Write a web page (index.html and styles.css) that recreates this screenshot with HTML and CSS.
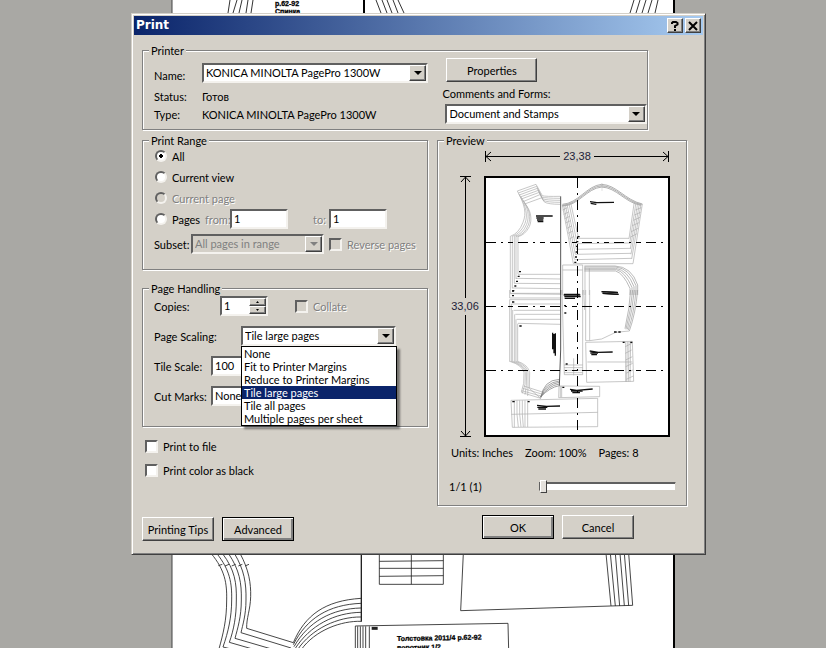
FILE: index.html
```html
<!DOCTYPE html>
<html lang="en">
<head>
    <meta charset="UTF-8">
    <meta name="viewport" content="width=device-width, initial-scale=1.0">
    <title>Print</title>
    <link rel="stylesheet" href="styles.css">
</head>
<body>

    <!-- Open document behind the dialog -->
    <svg class="document" viewBox="0 0 826 648" preserveAspectRatio="xMidYMin slice" aria-hidden="true">
        <rect x="172" y="-5" width="502" height="660" fill="#fff" stroke="#444"/>
        <path d="M674 0V648" stroke="#000" stroke-width="2"/>
        <g fill="none" stroke="#333" stroke-width="1">
            <path d="M230 0L228 13M237 0L233 13M242 0L239 13M248 0L246 13M253 0L251 13"/>
            <path d="M376 0L381 13M382 0L387 13M387 0L392 13M393 0L398 13M398 0L404 13"/>
            <path d="M634 0L630 13M640 0L636 13M646 0L642 13M652 0L648 13M658 0L655 13"/>
            <path d="M364 0V13" stroke="#000" stroke-width="2"/>
        </g>
        <g class="doc-text">
            <text x="275" y="6">р.62-92</text>
            <text x="275" y="14">Спинка</text>
            <text x="397" y="641" transform="rotate(-1 397 641)">Толстовка 2011/4 р.62-92</text>
            <text x="397" y="650" transform="rotate(-1 397 650)">воротник 1/2</text>
        </g>
        <g transform="translate(165 550) scale(.33333)" fill="none" stroke="#222" stroke-width="2.5">
            <path d="M138 10C180 60 186 100 185 150C185 210 175 250 161 300"/>
            <path d="M155 10C195 60 201 100 200 150C200 200 190 245 174 291L230 305"/>
            <path d="M172 10C210 60 215 100 214 150C214 200 206 240 193 277L280 302"/>
            <path d="M190 10C224 60 230 100 229 150C229 200 218 235 210 265L330 300"/>
            <path d="M208 10C238 60 244 100 243 150C243 195 233 225 228 248L378 294"/>
            <path d="M225 10C252 60 258 100 257 140C256 180 244 205 245 235L385 278"/>
            <path d="M160 47L172 43M180 48L192 43M200 48L212 43M220 48L232 43M240 48L252 43"/>
            <path d="M588 145C480 152 420 195 385 278"/>
            <path d="M588 160C490 164 425 205 385 284"/>
            <path d="M588 174C500 176 430 215 387 290"/>
            <path d="M588 187C510 188 435 225 389 298"/>
            <path d="M588 201C520 200 440 235 397 300"/>
            <path d="M588 214C530 212 450 240 408 300"/>
            <path d="M589 10V215" stroke-width="4"/>
            <path d="M643 10V103H835V10M739 10V103M643 34L835 32M643 55H835M643 79L835 77"/>
            <path d="M895 10L887 182L1337 168L1403 166L1391 10"/>
            <path d="M1323 10L1338 168M1336 10L1351 168M1351 10L1364 168M1365 10L1378 167M1378 10L1391 167"/>
            <path d="M571 300V228L1029 220L1031 300M578 229V300M586 229V300M594 229V300M602 229V300M613 229V300"/>
            <path d="M620 235H638" stroke-width="9"/>
        </g>
    </svg>

    <!-- Print dialog -->
    <form class="dialog" onsubmit="return false">
        <header class="titlebar">
            <h1>Print</h1>
            <div class="title-buttons">
                <button type="button" class="title-button" aria-label="Help">
                    <svg width="10" height="10" viewBox="0 0 10 10" fill="none" stroke="#000" stroke-width="2"><path d="M2 3V2L3 1H6L7.500 2V3.500L5 5V7M5 8V10"/></svg>
                </button>
                <button type="button" class="title-button" aria-label="Close">
                    <svg width="10" height="10" viewBox="0 0 10 10" stroke="#000" stroke-width="2"><path d="M1 1L9 9M9 1L1 9"/></svg>
                </button>
            </div>
        </header>

        <div class="content">
            <fieldset class="group printer">
                <legend>Printer</legend>
                <div class="printer-grid">
                    <div class="printer-info">
                        <label for="name">Name:</label>
                        <div class="combo">
                            <select id="name"><option>KONICA MINOLTA PagePro 1300W</option></select>
                            <span class="arrow"></span>
                        </div>
                        <span class="info">Status:</span><span class="info">Готов</span>
                        <span class="info">Type:</span><span class="info">KONICA MINOLTA PagePro 1300W</span>
                    </div>
                    <div class="printer-options">
                        <button type="button" class="button properties">Properties</button>
                        <label for="comments">Comments and Forms:</label>
                        <div class="combo comments">
                            <select id="comments"><option>Document and Stamps</option></select>
                            <span class="arrow"></span>
                        </div>
                    </div>
                </div>
            </fieldset>

            <div class="columns">
                <div class="settings">
                    <fieldset class="group range">
                        <legend>Print Range</legend>
                        <div class="rows">
                            <div class="row"><input type="radio" name="range" id="all" checked><label for="all">All</label></div>
                            <div class="row"><input type="radio" name="range" id="view"><label for="view">Current view</label></div>
                            <div class="row"><input type="radio" name="range" id="page" disabled><label for="page" class="disabled">Current page</label></div>
                            <div class="row">
                                <input type="radio" name="range" id="pages"><label for="pages" class="pages-label">Pages</label>
                                <label for="from" class="from-label disabled">from:</label><input type="text" id="from" class="page-number" value="1">
                                <label for="to" class="to-label disabled">to:</label><input type="text" id="to" class="page-number" value="1">
                            </div>
                            <div class="row subset">
                                <label for="subset" class="subset-label">Subset:</label>
                                <div class="combo subset-combo">
                                    <select id="subset" disabled><option>All pages in range</option></select>
                                    <span class="arrow"></span>
                                </div>
                                <input type="checkbox" id="reverse" disabled><label for="reverse" class="disabled">Reverse pages</label>
                            </div>
                        </div>
                    </fieldset>

                    <fieldset class="group handling">
                        <legend>Page Handling</legend>
                        <div class="handling-rows">
                            <div class="row">
                                <label for="copies" class="copies-label">Copies:</label>
                                <div class="spinner">
                                    <input type="text" id="copies" value="1">
                                    <div class="spin-buttons">
                                        <button type="button" aria-label="More copies"><svg width="3" height="2" viewBox="0 0 3 2"><path d="M0 2L1.500 0L3 2Z"/></svg></button>
                                        <button type="button" aria-label="Fewer copies"><svg width="3" height="2" viewBox="0 0 3 2"><path d="M0 0L1.500 2L3 0Z"/></svg></button>
                                    </div>
                                </div>
                                <input type="checkbox" id="collate" disabled><label for="collate" class="disabled">Collate</label>
                            </div>
                            <div class="row">
                                <label for="scaling" class="scaling-label">Page Scaling:</label>
                                <div class="combo scaling-combo">
                                    <select id="scaling"><option>Tile large pages</option></select>
                                    <span class="arrow"></span>
                                    <ul class="dropdown" role="listbox" aria-label="Page Scaling">
                                        <li role="option">None</li>
                                        <li role="option">Fit to Printer Margins</li>
                                        <li role="option">Reduce to Printer Margins</li>
                                        <li role="option" class="selected" aria-selected="true">Tile large pages</li>
                                        <li role="option">Tile all pages</li>
                                        <li role="option">Multiple pages per sheet</li>
                                    </ul>
                                </div>
                            </div>
                            <div class="row">
                                <label for="scale" class="tile-label">Tile Scale:</label>
                                <input type="text" id="scale" class="scale" value="100">
                            </div>
                            <div class="row">
                                <label for="marks" class="tile-label">Cut Marks:</label>
                                <div class="combo marks-combo">
                                    <select id="marks"><option>None</option></select>
                                    <span class="arrow"></span>
                                </div>
                            </div>
                        </div>
                    </fieldset>

                    <div class="output">
                        <div class="row"><input type="checkbox" id="file"><label for="file">Print to file</label></div>
                        <div class="row"><input type="checkbox" id="black"><label for="black">Print color as black</label></div>
                    </div>
                </div>

                <fieldset class="group preview">
                    <legend>Preview</legend>
                    <div class="preview-grid">
                        <div class="ruler horizontal">
                            <svg width="7" height="11" viewBox="0 0 7 11"><path d="M.5 0V11M6 1L1 5.500L6 10M1 5.500H7"/></svg>
                            <span class="line"></span>
                            <span class="size">23,38</span>
                            <span class="line"></span>
                            <svg width="7" height="11" viewBox="0 0 7 11"><path d="M6.500 0V11M1 1L6 5.500L1 10M0 5.500H6"/></svg>
                        </div>
                        <div class="ruler vertical">
                            <svg width="11" height="7" viewBox="0 0 11 7"><path d="M0 .5H11M1 6L5.500 1L10 6M5.500 1V7"/></svg>
                            <span class="line"></span>
                            <span class="size">33,06</span>
                            <span class="line"></span>
                            <svg width="11" height="7" viewBox="0 0 11 7"><path d="M0 6.500H11M1 1L5.500 6L10 1M5.500 0V6"/></svg>
                        </div>
                        <svg class="sheet" viewBox="0 0 186 261" role="img" aria-label="Page preview">
                            <rect x="1" y="1" width="184" height="259" fill="#fff" stroke="#000" stroke-width="2"/>
                            <!-- upper pieces -->
                            <g transform="translate(-49 -41) scale(.33333)" fill="none" stroke="#aaa" stroke-width="2">
                                <path d="M247 168L303 148L322 182Q330 185 376 184"/>
                                <path d="M250 174L305 154L320 186Q332 190 376 190"/>
                                <path d="M253 180L307 160L322 191Q334 196 376 196"/>
                                <path d="M256 186L310 166L324 196Q336 202 376 202"/>
                                <path d="M259 192L313 172L328 201Q340 208 376 208"/>
                                <path d="M264 200L317 178M269 207L321 188"/>
                                <path d="M247 168C270 210 275 235 264 262Q252 295 226 304V474M252 178C274 215 279 240 270 265Q258 295 232 304V460M258 186C280 218 284 243 275 268Q263 298 238 304V445M264 196C285 222 288 248 280 270Q268 300 243 305V432M268 205C289 225 292 255 283 275Q270 300 249 305V418"/>
                                <path d="M249 418H376M243 430L376 432M238 445L376 446M232 459L376 461M226 475H376"/>
                                <path d="M377 184V480" stroke="#555" stroke-width="3"/>
                                <path d="M382 208C430 205 455 152 500 148C545 150 570 195 622 207M382 211C430 209 455 156 500 152C545 154 570 199 620 209M382 213C430 213 455 160 500 156C545 158 570 203 618 211" stroke="#888"/>
                                <path d="M382 210L415 386M386 210L418 372M391 209L421 358M396 207L424 343M402 205L427 328M407 203L431 312"/>
                                <path d="M622 207L594 386M618 207L590 372M613 206L588 358M608 204L586 342M603 202L584 326M598 200L582 311"/>
                                <path d="M383 225L397 218M386 238L401 231M389 251L404 244M392 264L407 257M396 280L411 272M399 295L414 288M403 312L417 304M601 225L619 218M598 240L617 232M595 256L615 247M592 272L612 263M589 290L609 280M587 306L606 296"/>
                                <path d="M431 310H582M427 326L584 324M424 343L586 340M421 358L588 355M418 374L590 370M415 386H594"/>
                                <path d="M493 155H510M501 144V168" stroke-width="1"/>
                                <path d="M383 390H443V480M383 390V480M383 405H443M450 395V480M463 400V480"/>
                                <path d="M448 393H540Q590 395 608 450V480M448 396H542Q584 400 603 452V480M448 400H542Q578 405 597 455V480M448 404H544Q570 410 591 457V480M448 408H542Q565 415 585 460V480" stroke="#999"/>
                                <g stroke="#111" stroke-width="4">
                                    <path d="M303 243H353M304 249H326M306 255H325M308 260H325M465 200L485 203L537 202M467 205L484 208M500 470L548 472M503 475L551 478M387 478H434"/>
                                    <path d="M252 410H258M248 424H254M243 439H249M238 453H244M232 467H238M427 305H434M424 320H430M423 334H429M422 351H428M420 366H426M418 382H424"/>
                                </g>
                            </g>
                            <!-- lower pieces -->
                            <g transform="translate(-49 114) scale(.33333)" fill="none" stroke="#aaa" stroke-width="2">
                                <path d="M224 0V24H376M226 11L376 13M224 29H376M224 29V215M229 42H376M229 42V215M236 61H376M233 60V215M241 73H376M239 73V215M245 88H376M243 88V215M249 100L376 103M248 101V215"/>
                                <path d="M224 214Q262 225 267 248L266 280L259 306M229 214Q266 225 271 248L270 283L262 310M235 214Q270 225 275 248L274 287L270 314M242 214Q275 225 279 248L279 291L278 318M248 214Q280 225 284 248L283 295L317 325"/>
                                <path d="M266 288L322 306M263 295L320 312M260 302L318 318M259 307L317 325"/>
                                <path d="M317 325Q325 270 373 268M317 321Q330 278 373 273M317 321Q335 283 373 277M317 321Q340 287 373 282M317 321Q344 292 373 287" stroke="#777"/>
                                <path d="M377 0V180L373 288" stroke="#555" stroke-width="3"/>
                                <path d="M381 0L388 254H443V0M387 225H443M387 233H443M387 241H443M387 248H443M416 205V256M446 0L449 60M452 0V152M464 0V152L500 147L542 127L583 123M452 152H464"/>
                                <path d="M608 0Q602 70 583 123M603 0Q598 65 580 120M598 0Q593 60 577 118M593 0Q588 60 573 118M587 0Q584 55 570 116" stroke="#999"/>
                                <path d="M452 157L592 154L596 274L455 277ZM457 216H592M572 155V275M577 155L575 275M582 155L580 275M587 155L585 275M571 170L590 160M571 190L590 180M572 210L592 200M572 230L593 220M573 250L594 240M574 268L595 258"/>
                                <path d="M372 288L494 289V320L371 323ZM376 288V322M380 288V322"/>
                                <path d="M228 331L488 325V410L232 412ZM229 373L488 367M238 331V412M246 331V373L250 411M254 331V373L258 411M262 331V373L265 411M270 331V411M278 331V411"/>
                                <g stroke="#111" stroke-width="4">
                                    <path d="M386 15H436M388 20H437M389 25H420M500 5L549 8M503 10L550 13M464 183L490 187L533 186M466 189H489M469 194H486M353 128V178M357 132V190M361 130V197M405 298L425 301L473 297M408 303H443M412 308H435M306 346L335 349L375 348M307 352H337M310 357H333"/>
                                    <path d="M231 3H237M231 17H237M231 36H238M253 108H260M387 47H393M388 69H394M392 222H398M563 157H569M586 157H592M382 292H388M232 335H239M278 335H284M537 126H545M550 126H557"/>
                                </g>
                            </g>
                            <path d="M93.500 2V259" stroke="#000" stroke-dasharray="10 5 2 5"/>
                            <path d="M2 66.500H180M2 130.500H180M2 194.500H180" stroke="#000" stroke-dasharray="10 5 2 5 5 5"/>
                        </svg>
                    </div>
                    <div class="stats"><span>Units: Inches</span><span>Zoom: 100%</span><span>Pages: 8</span></div>
                    <div class="pager">
                        <label for="slider">1/1 (1)</label>
                        <input type="range" id="slider" min="1" max="8" value="1">
                    </div>
                </fieldset>
            </div>

            <footer class="buttons">
                <div class="button-group extra">
                    <button type="button" class="button">Printing Tips</button>
                    <button type="button" class="button default">Advanced</button>
                </div>
                <div class="button-group">
                    <button type="submit" class="button default">OK</button>
                    <button type="button" class="button">Cancel</button>
                </div>
            </footer>
        </div>
    </form>
</body>
</html>
```

FILE: styles.css
```css
* {
    box-sizing: border-box;
}
body {
    margin: 0;
    min-height: 100vh;
    padding: 13px 120px 0 131px;
    overflow: hidden;
    position: relative;
    background-color: #a9a8a4;
    font-family: Lato, "Liberation Sans", sans-serif;
    font-size: 11px;
    line-height: 13px;
    color: #000;
}
input, select, button {
    font: inherit;
    color: inherit;
    margin: 0;
}
.document {
    position: absolute;
    top: 0;
    left: 0;
    width: 100%;
    height: 100%;
}
.doc-text {
    font-family: "Liberation Sans", sans-serif;
    font-size: 7px;
    font-weight: bold;
    stroke: #000;
    stroke-width: 0.3;
}

/* Window frame */
.dialog {
    position: relative;
    min-width: 560px;
    background-color: #d4d0c8;
    border: 1px solid;
    border-color: #d4d0c8 #404040 #404040 #d4d0c8;
    box-shadow: inset 1px 1px 0 #fff, inset -1px -1px 0 #808080;
    padding: 2px;
}
.titlebar {
    display: flex;
    align-items: center;
    justify-content: space-between;
    height: 19px;
    padding: 0 2px;
    background: linear-gradient(to right, #0a246a, #a6caf0);
}
h1 {
    margin: 0;
    color: #fff;
    font-family: "DejaVu Sans", sans-serif;
    font-size: 12px;
    font-weight: bold;
}
.title-buttons {
    display: flex;
    gap: 2px;
}
.title-button, .button, .arrow, .spin-buttons button {
    background-color: #d4d0c8;
    border: 1px solid;
    border-color: #fff #404040 #404040 #fff;
    box-shadow: inset -1px -1px 0 #808080;
    padding: 0;
}
.title-button {
    display: flex;
    align-items: center;
    justify-content: center;
    width: 16px;
    height: 15px;
}
.content {
    padding: 9px 16px 11px 8px;
}

/* Group boxes */
.group {
    margin: 0;
    min-width: 0;
    padding: 0 0 0 11px;
    border: 1px solid #808080;
    box-shadow: 1px 1px 0 #fff, inset 1px 1px 0 #fff;
}
legend {
    margin-left: -5px;
    padding: 0 2px;
    background-color: #d4d0c8;
}
.row {
    display: flex;
    align-items: center;
    height: 20px;
}
.disabled {
    color: #808080;
    text-shadow: 1px 1px 0 #fff;
}

/* Fields */
input[type="text"], select {
    appearance: none;
    height: 20px;
    border: 2px solid;
    border-color: #606060 #f4f2ee #f4f2ee #606060;
    border-radius: 0;
    padding: 0 2px 2px;
    background-color: #fff;
}
select {
    display: block;
    width: 100%;
}
select:disabled {
    background-color: #d4d0c8;
    color: #808080;
    opacity: 1;
}
.combo {
    position: relative;
    min-width: 0;
}
.arrow {
    position: absolute;
    top: 2px;
    right: 2px;
    display: flex;
    align-items: center;
    justify-content: center;
    width: 17px;
    height: 16px;
    pointer-events: none;
}
.arrow::before {
    content: "";
    border: 4px solid transparent;
    border-top-color: #000;
    border-bottom-width: 0;
}
select:disabled + .arrow::before {
    border-top-color: #808080;
}
input[type="radio"], input[type="checkbox"] {
    appearance: none;
    flex: none;
    border: 2px solid;
    background-color: #fff;
}
input[type="radio"] {
    width: 12px;
    height: 12px;
    margin: 0 5px 0 1px;
    border-color: #606060 #f4f2ee #f4f2ee #606060;
    border-radius: 50%;
}
input[type="radio"]:checked {
    background-image: radial-gradient(circle, #000 2px, transparent 2px);
}
input[type="checkbox"] {
    width: 13px;
    height: 13px;
    margin-right: 5px;
    border-color: #606060 #f4f2ee #f4f2ee #606060;
}
input[type="radio"]:disabled, input[type="checkbox"]:disabled {
    background-color: #d4d0c8;
}

/* Printer */
.printer {
    margin-right: 39px;
}
.printer-grid {
    display: grid;
    grid-template-columns: 275fr 205fr;
    gap: 14px;
    padding-bottom: 5px;
}
.printer-info {
    display: grid;
    grid-template-columns: 48px 1fr;
    align-content: start;
    align-items: center;
    padding-top: 6px;
}
.printer-info .combo {
    margin-bottom: 5px;
}
.info {
    line-height: 18px;
}
.printer-options {
    display: flex;
    flex-direction: column;
    align-items: flex-start;
    padding-top: 1px;
}
.properties {
    width: 91px;
    margin: 0 0 5px 4px;
}
.comments {
    align-self: stretch;
    margin: 4px 0 0 3px;
}

/* Columns */
.columns {
    display: grid;
    grid-template-columns: 286fr 250fr;
    gap: 9px;
    margin-top: 4px;
}
.rows {
    display: flex;
    flex-direction: column;
    gap: 1px;
    margin-top: -1px;
    padding-bottom: 15px;
}
.pages-label {
    width: 33px;
}
.from-label {
    width: 25px;
}
.to-label {
    margin-left: 25px;
    width: 16px;
}
.page-number {
    width: 58px;
}
.subset {
    margin-top: 4px;
}
.subset-label {
    width: 37px;
}
.subset-combo {
    width: 133px;
    margin-right: 5px;
}
.handling {
    margin-top: 12px;
}
.handling-rows {
    display: flex;
    flex-direction: column;
    gap: 10px;
    padding: 1px 0 20px;
}
.copies-label {
    width: 66px;
}
.spinner {
    position: relative;
    width: 48px;
    margin-right: 27px;
}
.spinner input {
    display: block;
    width: 100%;
}
.spin-buttons {
    position: absolute;
    top: 2px;
    right: 2px;
    display: flex;
    flex-direction: column;
}
.spin-buttons button {
    display: flex;
    align-items: center;
    justify-content: center;
    width: 17px;
    height: 8px;
}
.scaling-label {
    width: 87px;
}
.scaling-combo {
    width: 155px;
}
.tile-label {
    width: 57px;
}
.scale, .marks-combo {
    width: 80px;
}
.dropdown {
    position: absolute;
    z-index: 1;
    top: 20px;
    left: 0;
    width: 156px;
    margin: 0;
    padding: 0;
    list-style: none;
    background-color: #fff;
    border: 1px solid #000;
    box-shadow: 3px 3px 2px rgba(0, 0, 0, 0.45);
}
.dropdown li {
    padding-left: 2px;
}
.dropdown .selected {
    background-color: #0a246a;
    color: #fff;
}
.output {
    display: flex;
    flex-direction: column;
    gap: 4px;
    padding: 9px 0 0 3px;
}

/* Preview */
.preview-grid {
    display: grid;
    grid-template-columns: 30px 1fr;
    column-gap: 4px;
    row-gap: 13px;
    padding: 3px 16px 0 1px;
}
.ruler {
    display: flex;
    align-items: center;
}
.ruler svg {
    flex: none;
    fill: none;
    stroke: #000;
}
.line {
    flex: 1;
    background-color: #000;
}
.horizontal {
    grid-column: 2;
    height: 13px;
    padding: 0 1px;
}
.horizontal .line {
    height: 1px;
}
.vertical {
    flex-direction: column;
}
.vertical .line {
    width: 1px;
}
.size {
    padding: 2px 3px;
    font-family: "Liberation Sans", sans-serif;
    color: #1c1c38;
}
.sheet {
    display: block;
    width: 100%;
}
.stats {
    display: flex;
    gap: 12px;
    padding: 9px 0 0 2px;
}
.pager {
    display: flex;
    align-items: center;
    justify-content: space-between;
    padding: 21px 10px 12px 0;
}
input[type="range"] {
    appearance: none;
    width: 137px;
    height: 13px;
    background: none;
}
input[type="range"]::-webkit-slider-runnable-track {
    height: 9px;
    background-color: #fff;
    border: 1px solid;
    border-color: #606060 #d4d0c8 #d4d0c8 #606060;
    box-shadow: inset 0 1px 0 #606060;
}
input[type="range"]::-webkit-slider-thumb {
    appearance: none;
    width: 7px;
    height: 13px;
    margin-top: -3px;
    background-color: #e4e1dc;
    border: 1px solid;
    border-color: #fff #404040 #404040 #fff;
}

/* Buttons */
.button {
    height: 24px;
}
.default {
    border-color: #000;
    box-shadow: inset 1px 1px 0 #fff, inset -2px -2px 0 #808080;
}
.buttons {
    display: flex;
    justify-content: space-between;
    padding: 9px 53px 0 0;
}
.button-group {
    display: flex;
    gap: 8px;
}
.button-group .button {
    width: 72px;
}
.extra {
    padding-top: 2px;
}
```
